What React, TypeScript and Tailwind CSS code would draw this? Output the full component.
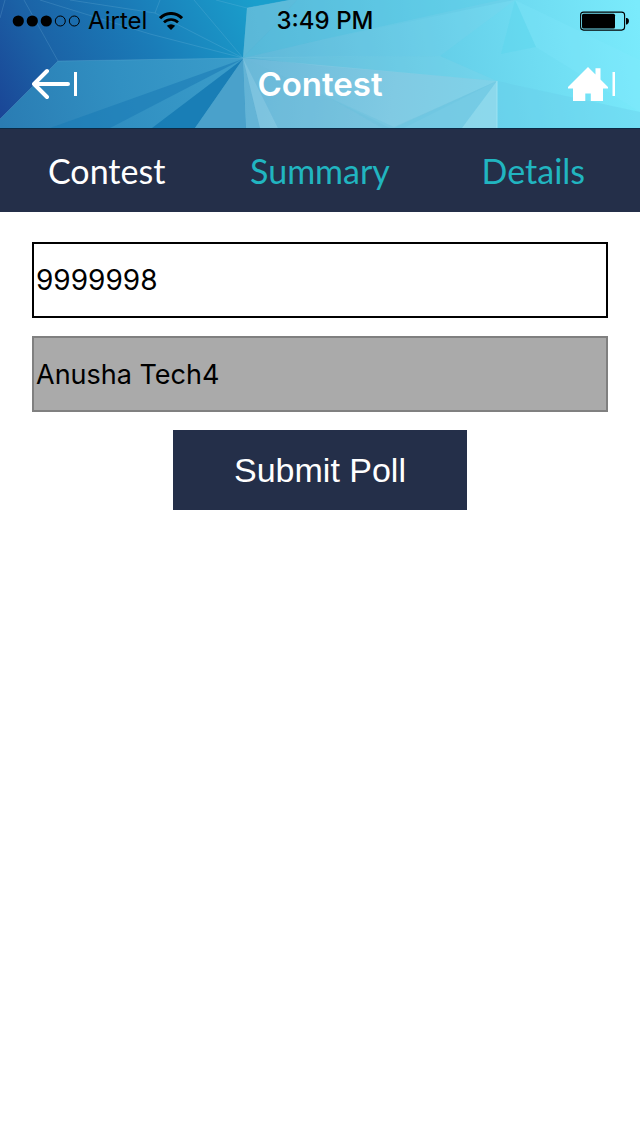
import { useState } from "react";

function HeaderBackdrop() {
  return (
    <svg
      className="absolute inset-0 h-full w-full"
      viewBox="0 0 640 128"
      preserveAspectRatio="none"
      aria-hidden="true"
    >
      <defs>
        <linearGradient id="sky" gradientUnits="userSpaceOnUse" x1="0" y1="120" x2="250" y2="-10">
          <stop offset="0" stopColor="#1a4596" />
          <stop offset="0.25" stopColor="#1b62a6" />
          <stop offset="0.6" stopColor="#1a7cb8" />
          <stop offset="1" stopColor="#1a9fcc" />
        </linearGradient>
        <linearGradient id="right" gradientUnits="userSpaceOnUse" x1="243" y1="90" x2="640" y2="20">
          <stop offset="0" stopColor="#56b0d3" />
          <stop offset="0.5" stopColor="#65cfe9" />
          <stop offset="1" stopColor="#7aebfc" />
        </linearGradient>
        <linearGradient id="band" gradientUnits="userSpaceOnUse" x1="0" y1="120" x2="243" y2="60">
          <stop offset="0" stopColor="#2a7cb3" />
          <stop offset="0.5" stopColor="#3190c2" />
          <stop offset="1" stopColor="#3b9dca" />
        </linearGradient>
        <linearGradient id="fan" gradientUnits="userSpaceOnUse" x1="243" y1="60" x2="497" y2="100">
          <stop offset="0" stopColor="#6ab8d9" />
          <stop offset="0.6" stopColor="#80cae3" />
          <stop offset="1" stopColor="#80d3e9" />
        </linearGradient>
      </defs>
      <rect width="640" height="128" fill="url(#sky)" />
      <path d="M243 58L247 8L290 0H640V128H246Z" fill="url(#right)" />
      <path d="M247 8L290 0H297L272 28L243 58Z" fill="#5dbddb" opacity="0.5" />
      <path d="M0 119L58 61L243 58V128H0Z" fill="url(#band)" />
      <path d="M243 59L50 128H110Z" fill="#1b7cb5" opacity="0.6" />
      <path d="M243 59L152 128H195Z" fill="#167bb4" opacity="0.9" />
      <path d="M243 59L195 128H246Z" fill="#4aa1cb" />
      <path d="M243 58L497 81V128H246Z" fill="url(#fan)" />
      <path d="M243 58L246 128H260Z" fill="#5badd2" opacity="0.5" />
      <path d="M243 58L260 128H278Z" fill="#9bd3e7" opacity="0.35" />
      <path d="M243 58L278 128H390L330 98Z" fill="#69b8d8" opacity="0.3" />
      <path d="M330 98L382 128H404L497 81L394 127Z" fill="#66c0de" opacity="0.35" />
      <path d="M497 81L394 128H462Z" fill="#69c6e1" opacity="0.5" />
      <path d="M497 81L462 128H497Z" fill="#9ee0ef" opacity="0.4" />
      <path d="M243 57L440 56L497 81L320 66Z" fill="#8ad2e9" opacity="0.25" />
      <path d="M297 0L272 28L243 58L320 40L514 0Z" fill="#55c6e3" opacity="0.35" />
      <path d="M243 58L320 40L500 0H515L440 56Z" fill="#86d3ea" opacity="0.2" />
      <path d="M515 0L501 54L536 47Z" fill="#52d4ec" opacity="0.3" />
      <path d="M515 0L536 47L640 112V60Z" fill="#85eafd" opacity="0.2" />
      <path d="M497 81L640 112V128H497Z" fill="#68cce7" opacity="0.35" />
      <path d="M497 81V128" stroke="#a5e8f5" strokeWidth="1" opacity="0.8" />
      <g fill="none" stroke="#8bc8e4" strokeOpacity="0.2" strokeWidth="1">
        <path d="M24 0L58 61L0 119" />
        <path d="M0 18L5 0M70 0L155 13L243 58M40 0L150 34L243 58M155 13L160 0M194 0L243 58M216 0L247 8L290 0" />
        <path d="M58 61L243 58" />
      </g>
    </svg>
  );
}

function SignalDots() {
  return (
    <svg className="h-6 w-[68px]" viewBox="0 0 68 24" aria-hidden="true">
      <circle cx="6.3" cy="12" r="5.6" />
      <circle cx="20.3" cy="12" r="5.6" />
      <circle cx="34.3" cy="12" r="5.6" />
      <circle cx="48.3" cy="12" r="5" fill="none" stroke="#000" />
      <circle cx="62.3" cy="12" r="5" fill="none" stroke="#000" />
    </svg>
  );
}

function WifiIcon() {
  return (
    <svg className="h-[18px] w-6" viewBox="0 0 24 18" aria-hidden="true">
      <path d="M1 6.2C7-.1 17-.1 23 6.2" fill="none" stroke="#000" strokeWidth="3" />
      <path d="M5 10.4C9 6.5 15 6.5 19 10.4" fill="none" stroke="#000" strokeWidth="2.7" />
      <path d="M12 18L7.8 13.8Q12 10.8 16.2 13.8Z" />
    </svg>
  );
}

function BatteryIcon() {
  return (
    <svg className="h-5 w-[50px]" viewBox="0 0 50 20" aria-hidden="true">
      <rect x="0.6" y="1.1" width="44" height="18" rx="3" fill="none" stroke="#000" strokeWidth="1.1" />
      <rect x="2" y="2.7" width="33" height="14.8" rx="1.5" />
      <path d="M46 7H47Q49 7.5 49 10T47 13.5H46Z" />
    </svg>
  );
}

function BackIcon() {
  return (
    <svg className="h-8 w-[46px]" viewBox="0 0 46 32" fill="none" stroke="#fff" aria-hidden="true">
      <path d="M15 3L2 16L15 29M2 16H36" strokeWidth="4" strokeLinecap="round" strokeLinejoin="round" />
      <path d="M43.5 4V28" strokeWidth="3" />
    </svg>
  );
}

function HomeIcon() {
  return (
    <svg className="h-[34px] w-12" viewBox="0 0 48 34" fill="#fff" aria-hidden="true">
      <path d="M20 0L27.5 7.5V1.3H32.5V12.5L40 20V21.5H35V34H22.8V26.5H17.3V34H5V21.5H0V20Z" />
      <path d="M44.5 5H47V29H44.5Z" />
    </svg>
  );
}

const tabs = ["Contest", "Summary", "Details"];

export default function App() {
  const [active, setActive] = useState("Contest");
  const [code, setCode] = useState("9999998");

  return (
    <div className="min-h-screen bg-white font-['Inter',sans-serif] text-black">
      <header className="relative border-b border-[#0b2a46]">
        <HeaderBackdrop />
        <div className="relative">
          <div className="grid h-[42px] grid-cols-3 items-center pr-[10px] pl-3 text-2xl">
            <div className="flex items-center gap-2">
              <SignalDots />
              <span>Airtel</span>
              <span className="pl-1">
                <WifiIcon />
              </span>
            </div>
            <div className="pl-2 text-center font-medium whitespace-nowrap">3:49 PM</div>
            <div className="flex justify-end">
              <BatteryIcon />
            </div>
          </div>
          <div className="grid h-[86px] grid-cols-3 items-center px-6 pb-[2px]">
            <button type="button" aria-label="Back" className="justify-self-start pl-2">
              <BackIcon />
            </button>
            <h1 className="text-center text-[33px] leading-10 font-semibold text-white">Contest</h1>
            <button type="button" aria-label="Home" className="justify-self-end">
              <HomeIcon />
            </button>
          </div>
        </div>
      </header>

      <nav className="grid h-[83px] grid-cols-3 bg-[#242f49] font-['Lato',sans-serif] text-[34px]">
        {tabs.map((tab) => (
          <button
            key={tab}
            type="button"
            onClick={() => setActive(tab)}
            aria-current={active === tab ? "page" : undefined}
            className={active === tab ? "text-white" : "text-[#21b5c0]"}
          >
            {tab}
          </button>
        ))}
      </nav>

      <main className="flex flex-col items-center gap-[18px] px-8 pt-[30px]">
        <input
          type="text"
          aria-label="Contest code"
          value={code}
          onChange={(e) => setCode(e.target.value)}
          className="h-19 w-full border-2 border-black bg-white px-[2px] text-[28px] outline-none"
        />
        <input
          type="text"
          aria-label="Name"
          value="Anusha Tech4"
          readOnly
          className="h-19 w-full border-2 border-[#808080] bg-[#aaaaaa] px-[2px] text-[27px] outline-none"
        />
        <button
          type="button"
          className="h-20 w-[294px] bg-[#242f49] font-['Liberation_Sans',sans-serif] text-[34px] text-white"
        >
          Submit Poll
        </button>
      </main>
    </div>
  );
}
